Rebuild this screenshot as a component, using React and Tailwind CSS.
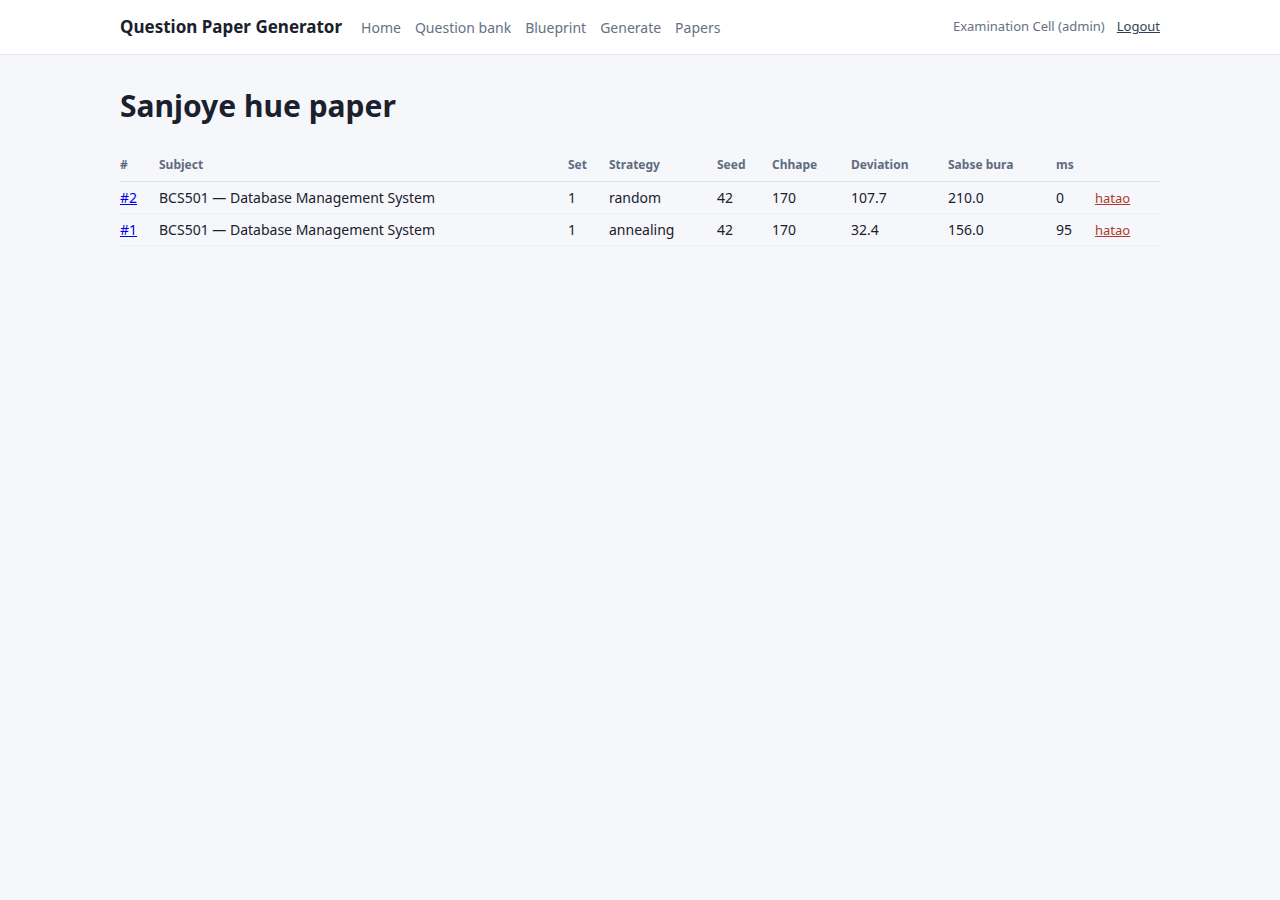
import React from 'react';

const papers = [
  { id: 2, subject: 'BCS501 — Database Management System', set: 1, strategy: 'random', seed: 42, marks: 170, deviation: '107.7', worst: '210.0', ms: 0 },
  { id: 1, subject: 'BCS501 — Database Management System', set: 1, strategy: 'annealing', seed: 42, marks: 170, deviation: '32.4', worst: '156.0', ms: 95 },
];

const navLinks = ['Home', 'Question bank', 'Blueprint', 'Generate', 'Papers'];

export default function App() {
  return (
    <div className="min-h-screen bg-[#f5f7fb] text-[#1a202c]" style={{ fontFamily: '"Noto Sans", "Open Sans", sans-serif' }}>
      <header className="bg-white border-b border-[#e2e6ee]">
        <div className="w-[1040px] mx-auto h-[54px] flex items-center justify-between">
          <div className="flex items-center">
            <span className="text-[17px] font-bold text-[#1a202c] mr-[19px]">Question Paper Generator</span>
            <nav className="flex items-center gap-[14px] text-[14px] text-[#667085]">
              {navLinks.map((l) => (
                <a key={l} href="#" className="hover:text-[#1a202c]">{l}</a>
              ))}
            </nav>
          </div>
          <div className="flex items-center gap-3 text-[13px]">
            <span className="text-[#667085]">Examination Cell (admin)</span>
            <a href="#" className="underline text-[#334155]">Logout</a>
          </div>
        </div>
      </header>

      <main className="w-[1040px] mx-auto pt-[32px]">
        <h1 className="text-[30px] leading-[38px] font-bold text-[#1a202c] mb-[24px]">Sanjoye hue paper</h1>

        <table className="w-full table-fixed border-collapse text-[14px]">
          <colgroup>
            <col className="w-[39px]" />
            <col className="w-[409px]" />
            <col className="w-[41px]" />
            <col className="w-[108px]" />
            <col className="w-[55px]" />
            <col className="w-[79px]" />
            <col className="w-[97px]" />
            <col className="w-[108px]" />
            <col className="w-[39px]" />
            <col className="w-[65px]" />
          </colgroup>
          <thead>
            <tr className="border-b border-[#dde3ec] text-left text-[12px] font-bold text-[#5f6b7f]">
              <th className="py-[7px] font-bold">#</th>
              <th className="py-[7px] font-bold">Subject</th>
              <th className="py-[7px] font-bold">Set</th>
              <th className="py-[7px] font-bold">Strategy</th>
              <th className="py-[7px] font-bold">Seed</th>
              <th className="py-[7px] font-bold">Chhape</th>
              <th className="py-[7px] font-bold">Deviation</th>
              <th className="py-[7px] font-bold">Sabse bura</th>
              <th className="py-[7px] font-bold">ms</th>
              <th className="py-[7px]"></th>
            </tr>
          </thead>
          <tbody>
            {papers.map((p) => (
              <tr key={p.id} className="border-b border-[#edf0f5] h-[32px] text-[#1a202c]">
                <td><a href="#" className="underline text-[#0000ee]">#{p.id}</a></td>
                <td>{p.subject}</td>
                <td>{p.set}</td>
                <td>{p.strategy}</td>
                <td>{p.seed}</td>
                <td>{p.marks}</td>
                <td>{p.deviation}</td>
                <td>{p.worst}</td>
                <td>{p.ms}</td>
                <td><a href="#" className="underline text-[13px] text-[#b0392b]">hatao</a></td>
              </tr>
            ))}
          </tbody>
        </table>
      </main>
    </div>
  );
}
